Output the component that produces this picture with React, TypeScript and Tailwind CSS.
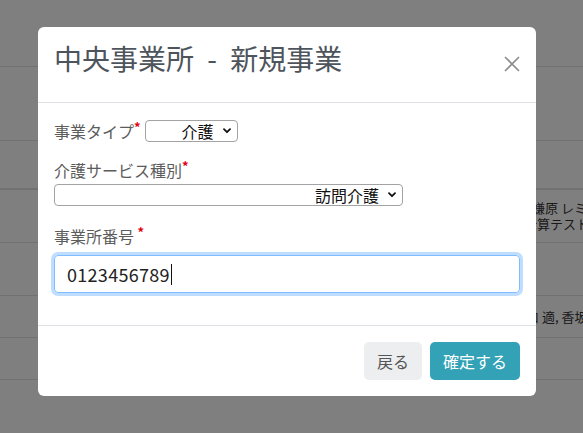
import React from 'react';

function Chevron() {
	return (
		<svg width="8" height="6" viewBox="0 0 8 6" className="ml-[9px] shrink-0">
			<path d="M1 1.2l3 3 3-3" fill="none" stroke="#111" strokeWidth="1.8" strokeLinecap="round" strokeLinejoin="round" />
		</svg>
	);
}

function FakeSelect({ value, className }: { value: string; className: string }) {
	return (
		<div className={`flex h-[22px] items-center justify-end rounded-[4px] border border-[#a3a3a3] bg-white pr-[6px] text-[16px] leading-none text-[#111] ${className}`}>
			<span>{value}</span>
			<Chevron />
		</div>
	);
}

function Required() {
	return <span className="align-super text-[13px] font-bold leading-none text-[#e3000f]">*</span>;
}

function BackgroundPage() {
	return (
		<div className="flex flex-col text-[13px] text-[#333]">
			<div className="h-[67px] border-b border-[#dee2e6]" />
			<div className="h-[74px] border-b border-[#dee2e6]" />
			<div className="h-[49px] border-b-2 border-[#dee2e6]" />
			<div className="grid h-[53px] grid-cols-[518px_1fr] items-center border-b border-[#dee2e6]">
				<div />
				<div className="flex flex-col whitespace-nowrap leading-[16px]">
					<span className="pl-[14px]">嫌原 レミ</span>
					<span className="pl-[6px]">計算テスト</span>
				</div>
			</div>
			<div className="h-[53px] border-b border-[#dee2e6]" />
			<div className="grid h-[42px] grid-cols-[518px_1fr] items-center border-b border-[#dee2e6]">
				<div />
				<span className="whitespace-nowrap pl-[8px]">口 適, 香坂</span>
			</div>
			<div className="h-[42px] border-b border-[#dee2e6]" />
		</div>
	);
}

export default function App() {
	return (
		<div className="relative h-[433px] w-[583px] overflow-hidden bg-white font-['Noto_Sans_CJK_JP',sans-serif]">
			<BackgroundPage />

			<div className="absolute inset-0 flex items-start bg-black/50 pl-[38px] pt-[27px]">
				<div className="flex w-[498px] flex-col rounded-[6px] bg-white">
					<div className="flex h-[76px] items-start justify-between border-b border-[#dee2e6] px-4 pt-[14px]">
						<h3 className="text-[28px] leading-[34px] text-[#4d545c]">
							中央事業所<span className="px-[7px]"> - </span>新規事業
						</h3>
						<button className="mt-[15px]" aria-label="close">
							<svg width="16" height="16" viewBox="0 0 16 16">
								<path d="M1 1L15 15M15 1L1 15" stroke="#8c8c8c" strokeWidth="1.6" />
							</svg>
						</button>
					</div>

					<div className="flex flex-col px-4 pb-8 pt-4 text-[16px] text-[#5c5c5c]">
						<div className="flex h-[24px] items-center">
							<span className="leading-[24px]">
								事業タイプ
								<Required />
							</span>
							<FakeSelect value="介護" className="ml-1 w-[93px]" />
						</div>

						<label className="mt-[15px] leading-[24px]">
							介護サービス種別
							<Required />
						</label>
						<FakeSelect value="訪問介護" className="mt-[2px] w-[349px]" />

						<label className="mt-[18px] leading-[24px]">
							事業所番号 <Required />
						</label>
						<div className="mt-[7px] flex h-[38px] items-center rounded-[4px] border border-[#80bdff] pl-[12px] text-[18px] text-[#222] shadow-[0_0_0_3px_rgba(0,123,255,0.25)]">
							<span className="tracking-[0.3px]">0123456789</span>
							<span className="ml-[1px] h-[21px] w-px bg-[#111]" />
						</div>
					</div>

					<div className="flex justify-end gap-2 border-t border-[#dee2e6] p-4">
						<button className="h-[38px] rounded-[5px] bg-[#eceeef] px-[13px] text-[16px] text-[#555]">戻る</button>
						<button className="h-[38px] rounded-[5px] bg-[#33a2b6] px-[13px] text-[16px] text-white">確定する</button>
					</div>
				</div>
			</div>
		</div>
	);
}
